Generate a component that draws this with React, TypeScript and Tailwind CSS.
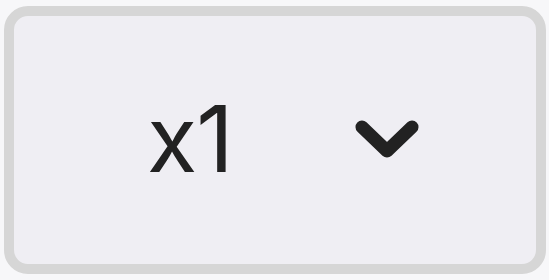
export default function App() {
  return (
    <div className="w-[549px] h-[280px] bg-[#f7f7f9] pt-[6px] pl-[4px]">
      <div className="w-[542px] h-[268px] rounded-[24px] border-[10px] border-[#d6d6d6] bg-[#efeef3] flex items-center pl-[133px]">
        <span
          className="w-[208px] text-[92px] leading-none text-[#222222] tracking-[-1px] pb-[2px]"
          style={{ fontFamily: "Inter, 'Noto Sans', sans-serif" }}
        >
          x1
        </span>
        <svg width="64" height="38" viewBox="0 0 64 38" className="mt-[-2px]">
          <path
            d="M7 7 L32 31 L57 7"
            fill="none"
            stroke="#222222"
            strokeWidth="13"
            strokeLinecap="round"
            strokeLinejoin="round"
          />
        </svg>
      </div>
    </div>
  )
}
